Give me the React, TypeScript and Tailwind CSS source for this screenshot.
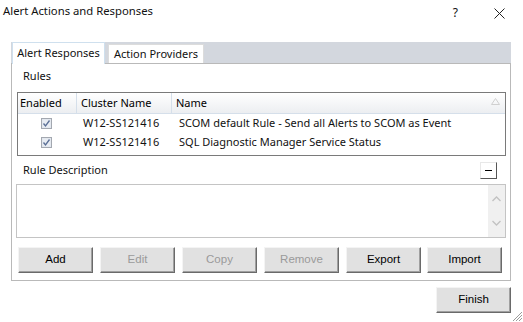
import React from "react";

const ui = "font-['Noto_Sans','Open_Sans',sans-serif]";
const btnFont = "font-['Liberation_Sans','Arial',sans-serif]";

type Rule = { cluster: string; name: string };

const rules: Rule[] = [
  { cluster: "W12-SS121416", name: "SCOM default Rule - Send all Alerts to SCOM as Event" },
  { cluster: "W12-SS121416", name: "SQL Diagnostic Manager Service Status" },
];

function CheckBox() {
  return (
    <svg width="11" height="11" viewBox="0 0 11 11">
      <rect x="0.5" y="0.5" width="10" height="10" fill="#dfe4ec" stroke="#a3a8b0" />
      <rect x="1.5" y="1.5" width="8" height="8" fill="#e8ecf2" />
      <path d="M2.5 5.5 L4.5 8 L8.5 2.5" fill="none" stroke="#5a6f96" strokeWidth="1.3" />
    </svg>
  );
}

function Button({ label, disabled = false, className = "" }: { label: string; disabled?: boolean; className?: string }) {
  return (
    <div
      className={`w-[75px] h-[26px] flex items-center justify-center bg-[#e1e1e1] border border-t-[#f4f4f4] border-l-[#f4f4f4] border-r-[#6a6a6a] border-b-[#6a6a6a] shadow-[inset_-1px_-1px_0_#a0a0a0] text-[11.5px] ${btnFont} ${
        disabled ? "text-[#9a9a9a]" : "text-black"
      } ${className}`}
    >
      {label}
    </div>
  );
}

export default function App() {
  return (
    <div className={`relative w-[523px] h-[322px] bg-white text-[11px] text-[#111] overflow-hidden ${ui}`}>
      {/* title bar */}
      <div className="flex items-start h-[42px] pt-[3px]">
        <span className="pl-[3px] text-[11.3px]">Alert Actions and Responses</span>
        <span className="ml-auto mt-[1px] mr-[36px] text-[12px]">?</span>
        <svg className="mt-[5px] mr-[18px]" width="11" height="11" viewBox="0 0 11 11">
          <path d="M0.5 0.5 L10.5 10.5 M10.5 0.5 L0.5 10.5" stroke="#222" strokeWidth="1" />
        </svg>
      </div>

      {/* tabs */}
      <div className="ml-[11px] w-[500px]">
        <div className="relative h-[21px] bg-[#d3d7de] flex items-end">
          <div className="relative z-10 ml-[1px] w-[93px] h-[22px] -mb-[1px] bg-white border border-b-0 border-[#cfe0ee] flex items-center justify-center">
            Alert Responses
          </div>
          <div className="ml-[3px] w-[96px] h-[19px] bg-white border border-b-0 border-[#dcdcdc] flex items-center justify-center">
            Action Providers
          </div>
        </div>

        {/* panel */}
        <div className="border border-[#b9b9b9] h-[218px] flex flex-col">
          <div className="h-[24px] flex items-center pl-[11px] mb-[4px]">Rules</div>

          {/* grid */}
          <div className="ml-[5px] w-[489px] h-[64px] border border-[#7a7a7a] bg-white flex flex-col">
            <div className="h-[21px] flex bg-gradient-to-b from-white to-[#eceef1] border-b border-[#d5dfea] text-black">
              <div className="w-[59px] flex items-center pl-[2px] border-r border-[#d5dfea]">Enabled</div>
              <div className="w-[95px] flex items-center pl-[4px] border-r border-[#d5dfea]">Cluster Name</div>
              <div className="flex-1 flex items-center pl-[4px] relative">
                Name
                <svg className="absolute right-[5px] top-[5px]" width="9" height="7" viewBox="0 0 9 7">
                  <path d="M4.5 0.5 L8.5 6.5 L0.5 6.5 Z" fill="none" stroke="#d0d0d0" />
                </svg>
              </div>
            </div>
            {rules.map((r) => (
              <div key={r.name} className="h-[19px] flex items-center">
                <div className="w-[60px] flex justify-center pr-[4px]">
                  <CheckBox />
                </div>
                <div className="w-[95px] pl-[5px]">{r.cluster}</div>
                <div className="flex-1 pl-[6px]">{r.name}</div>
              </div>
            ))}
          </div>

          {/* rule description */}
          <div className="h-[28px] flex items-center pl-[11px] pr-[13px]">
            <span>Rule Description</span>
            <div className="ml-auto w-[17px] h-[17px] flex items-center justify-center bg-white border border-t-[#e8e8e8] border-l-[#e8e8e8] border-r-[#555] border-b-[#555]">
              <div className="w-[7px] h-[1px] bg-black" />
            </div>
          </div>
          <div className="ml-[4px] w-[490px] h-[54px] border border-[#c4c4c4] flex justify-end">
            <div className="w-[17px] bg-[#f0f0f0] flex flex-col items-center justify-between py-[11px]">
              <svg width="9" height="6" viewBox="0 0 9 6">
                <path d="M0.5 5 L4.5 1 L8.5 5" fill="none" stroke="#c2c2c2" strokeWidth="1.3" />
              </svg>
              <svg width="9" height="6" viewBox="0 0 9 6">
                <path d="M0.5 1 L4.5 5 L8.5 1" fill="none" stroke="#c2c2c2" strokeWidth="1.3" />
              </svg>
            </div>
          </div>

          {/* buttons */}
          <div className="mt-[9px] ml-[6px] flex gap-[7px]">
            <Button label="Add" />
            <Button label="Edit" disabled />
            <Button label="Copy" disabled />
            <Button label="Remove" disabled />
            <Button label="Export" />
            <Button label="Import" className="-ml-[1px]" />
          </div>
        </div>
      </div>

      <div className="flex justify-end mt-[6px] mr-[12px]">
        <Button label="Finish" />
      </div>

      {/* resize grip */}
      <svg className="absolute right-0 bottom-0" width="12" height="12" viewBox="0 0 12 12">
        <path d="M11 2 L2 11 M11 5 L5 11 M11 8 L8 11" stroke="#9a9a9a" strokeWidth="1" />
      </svg>
    </div>
  );
}
